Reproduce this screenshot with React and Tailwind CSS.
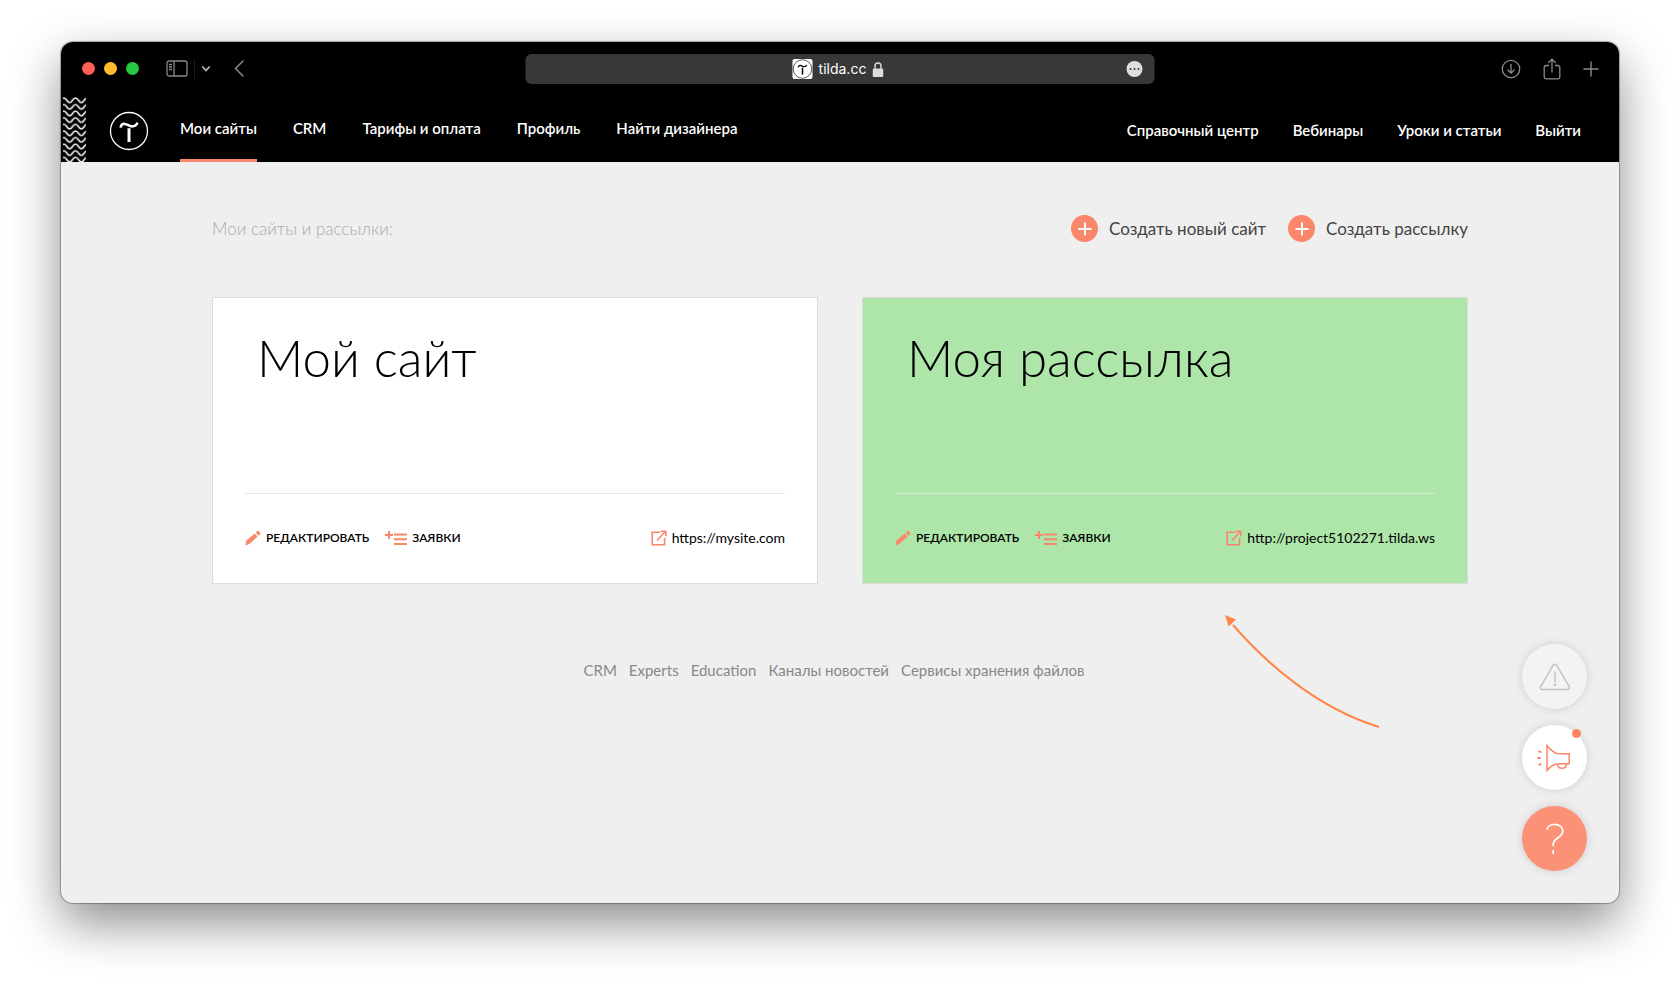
import React from 'react';

const mainLinks = [
  { label: 'Мои сайты', active: true },
  { label: 'CRM' },
  { label: 'Тарифы и оплата' },
  { label: 'Профиль' },
  { label: 'Найти дизайнера' },
];

const helpLinks = ['Справочный центр', 'Вебинары', 'Уроки и статьи', 'Выйти'];

const footerLinks = ['CRM', 'Experts', 'Education', 'Каналы новостей', 'Сервисы хранения файлов'];

const projects = [
  { title: 'Мой сайт', url: 'https://mysite.com', bg: 'bg-white', line: 'border-[#e6e6e6]' },
  { title: 'Моя рассылка', url: 'http://project5102271.tilda.ws', bg: 'bg-[#aee6aa]', line: 'border-[#d6e8d5]', arrow: true },
];

function TildaMark({ className }) {
  return (
    <svg viewBox="0 0 40 40" fill="none" stroke="currentColor" className={className} aria-hidden="true">
      <circle cx="20" cy="20" r="18.5" strokeWidth="1.3" />
      <path d="M11.6 16.6c.4-2.600 2-4 4.300-3.700 2.600.4 4.400 2.500 7 2.500 2.700 0 4.700-1.300 5.500-3.700" strokeWidth="2.500" />
      <path d="M20 17.300v13.700" strokeWidth="3" />
    </svg>
  );
}

function PencilIcon() {
  return (
    <svg viewBox="0 0 16 16" className="size-4 shrink-0" fill="#fa876b" aria-hidden="true">
      <path d="M1.200 10.800 9.800 3.400 12.600 6.600 4.200 14 .4 15.600z" />
      <path d="M10.700 2.600 12.300 1.200c.5-.5 1-.4 1.500 0l1.400 1.700c.4.5.3 1-.1 1.400L13.500 5.800z" />
    </svg>
  );
}

function LeadsIcon() {
  return (
    <svg viewBox="0 0 22 16" className="h-4 w-[22px] shrink-0" fill="#fa876b" aria-hidden="true">
      <path d="M3 1h2v3h3v2H5v3H3V6H0V4h3z" />
      <path d="M9 3.500h13v2H9zM9 8.200h13v2H9zM9 12.900h13v2H9z" />
    </svg>
  );
}

function ExternalIcon() {
  return (
    <svg viewBox="0 0 16 16" className="size-4 shrink-0" fill="none" stroke="#fa876b" strokeWidth="1.600" aria-hidden="true">
      <path d="M9 2.200H1.200v12.600h12.400V8" />
      <path d="M6 10.500 14 1.800M9.800 1.200h5v5" />
    </svg>
  );
}

function TitleBar() {
  return (
    <div className="relative flex h-[55px] items-center justify-between bg-black pb-0.5 pl-[21px] pr-5 text-[#8a8a8a]">
      <div className="flex items-center">
        <div className="flex gap-[9px]">
          <button aria-label="Закрыть" className="size-[13px] rounded-full bg-[#ff5f57]" />
          <button aria-label="Свернуть" className="size-[13px] rounded-full bg-[#febc2e]" />
          <button aria-label="Развернуть" className="size-[13px] rounded-full bg-[#28c840]" />
        </div>
        <button aria-label="Боковая панель" className="ml-[27px]">
          <svg viewBox="0 0 22 17" className="h-[17px] w-[22px]" fill="none" stroke="currentColor" strokeWidth="1.300">
            <rect x="1" y="1" width="20" height="15" rx="2" />
            <path d="M8 1v15M3 4.500h3M3 7h3M3 9.500h3" />
          </svg>
        </button>
        <span className="ml-1.5 h-5 w-px bg-[#1c1c1c]" />
        <button aria-label="Группы вкладок" className="ml-1.5">
          <svg viewBox="0 0 10 6" className="h-1.5 w-2.5" fill="none" stroke="#b5b5b5" strokeWidth="1.800">
            <path d="M1.800 1 5 4.400 8.200 1" strokeLinecap="round" />
          </svg>
        </button>
        <button aria-label="Назад" className="ml-[23px]">
          <svg viewBox="0 0 10 17" className="h-[17px] w-2.5" fill="none" stroke="currentColor" strokeWidth="1.500">
            <path d="M9 1 1.500 8.500 9 16" strokeLinecap="round" />
          </svg>
        </button>
      </div>

      <div className="absolute left-1/2 top-3 flex h-[30px] w-[629px] -translate-x-1/2 items-center justify-center gap-1.5 rounded-md bg-[#383838] pr-1 font-['Inter','Liberation_Sans',sans-serif] text-sm text-white">
        <span className="rounded-xs bg-white text-black">
          <TildaMark className="size-5" />
        </span>
        <span>tilda.cc</span>
        <svg viewBox="0 0 11 15" className="h-[15px] w-[11px]" aria-hidden="true">
          <path d="M2.500 7V4a3 3 0 0 1 6 0v3" fill="none" stroke="#dcdcdc" strokeWidth="1.400" />
          <rect y="6.500" width="11" height="8.500" rx="1.500" fill="#dcdcdc" />
        </svg>
        <button aria-label="Ещё" className="absolute right-3 top-[7px] flex size-4 items-center justify-center gap-0.5 rounded-full bg-[#dfdfdf]">
          <span className="size-0.5 rounded-full bg-[#383838]" />
          <span className="size-0.5 rounded-full bg-[#383838]" />
          <span className="size-0.5 rounded-full bg-[#383838]" />
        </button>
      </div>

      <div className="flex items-center gap-[22px]">
        <button aria-label="Загрузки">
          <svg viewBox="0 0 20 20" className="size-5" fill="none" stroke="currentColor" strokeWidth="1.300">
            <circle cx="10" cy="10" r="8.700" />
            <path d="M10 5.500v8.500M6.800 11 10 14.200 13.200 11" strokeLinecap="round" />
          </svg>
        </button>
        <button aria-label="Поделиться">
          <svg viewBox="0 0 18 22" className="h-[22px] w-[18px]" fill="none" stroke="currentColor" strokeWidth="1.300">
            <path d="M6 7.500H3a1.800 1.800 0 0 0-1.800 1.800v9.700A1.800 1.800 0 0 0 3 20.800h12a1.800 1.800 0 0 0 1.800-1.800V9.300A1.800 1.800 0 0 0 15 7.500h-3" />
            <path d="M9 14V1.500M5.700 4.500 9 1.200l3.300 3.300" strokeLinecap="round" />
          </svg>
        </button>
        <button aria-label="Новая вкладка">
          <svg viewBox="0 0 16 16" className="size-4" fill="none" stroke="currentColor" strokeWidth="1.400">
            <path d="M8 .5v15M.5 8h15" />
          </svg>
        </button>
      </div>
    </div>
  );
}

function SiteNav() {
  return (
    <header className="flex h-[65px] items-stretch bg-black text-[15px] font-semibold text-white">
      <svg className="ml-0.5 h-full w-[23px]" fill="none" stroke="#fff" strokeWidth="1.500" aria-hidden="true">
        <defs>
          <pattern id="waves" width="11.7" height="6.6" patternUnits="userSpaceOnUse" patternTransform="translate(.8 0)">
            <path d="M0 .9C3 .9 3 5.600 5.850 5.600S8.700.9 11.700.9" />
          </pattern>
        </defs>
        <rect width="23" height="65" fill="url(#waves)" stroke="none" />
      </svg>
      <a href="#" aria-label="Tilda" className="ml-[23px] flex items-center pt-0.5">
        <TildaMark className="size-10" />
      </a>
      <nav className="ml-[31px] flex gap-9">
        {mainLinks.map((link) => (
          <a
            key={link.label}
            href="#"
            className={`flex items-center border-b-3 ${link.active ? 'border-[#fa876b]' : 'border-transparent'}`}
          >
            {link.label}
          </a>
        ))}
      </nav>
      <nav className="ml-auto mr-[38px] flex items-center gap-[34px] pt-0.5">
        {helpLinks.map((label) => (
          <a key={label} href="#">{label}</a>
        ))}
      </nav>
    </header>
  );
}

function CreateButton({ children }) {
  return (
    <button className="flex items-center gap-[11px] text-[17px] text-[#444]">
      <span className="flex size-[27px] items-center justify-center rounded-full bg-[#fa876b]">
        <svg viewBox="0 0 14 14" className="size-3.5" stroke="#fff" strokeWidth="2" aria-hidden="true">
          <path d="M7 .5v13M.5 7h13" />
        </svg>
      </span>
      {children}
    </button>
  );
}

function ProjectCard({ project }) {
  return (
    <article className={`relative flex h-[287px] flex-col border border-[#dcdcdc] px-8 ${project.bg}`}>
      <h2 className="flex-1 pl-3 pt-7 text-[51px] leading-16 font-light text-black">{project.title}</h2>
      <div className={`flex h-[90px] items-center gap-4 border-t pb-0.5 text-xs text-black ${project.line}`}>
        <a href="#" className="flex items-center gap-[5px] font-semibold">
          <PencilIcon />
          РЕДАКТИРОВАТЬ
        </a>
        <a href="#" className="flex items-center gap-[5px] font-semibold">
          <LeadsIcon />
          ЗАЯВКИ
        </a>
        <a href="#" className="ml-auto flex items-center gap-[5px] text-sm">
          <ExternalIcon />
          {project.url}
        </a>
      </div>
      {project.arrow && (
        <svg viewBox="0 0 160 120" className="absolute right-[84px] top-full mt-7 h-[120px] w-40" fill="none" aria-hidden="true">
          <path d="M10 14C43 52 94 97 156 116" stroke="#ff8648" strokeWidth="2" />
          <path d="M2 4 13 8.500 5.500 15.500z" fill="#ff8648" />
        </svg>
      )}
    </article>
  );
}

function FloatingButtons() {
  return (
    <div className="absolute bottom-8 right-8 flex flex-col gap-4">
      <button aria-label="Предупреждения" className="flex size-[65px] items-center justify-center rounded-full bg-[#f3f3f3] shadow-[0_0_10px_rgba(0,0,0,0.14)]">
        <svg viewBox="0 0 32 28" className="h-7 w-8" fill="none" stroke="#c3c3c3" strokeWidth="1.500">
          <path d="M14.200 2.200a2 2 0 0 1 3.500 0l12.600 21.600a1.800 1.800 0 0 1-1.600 2.700H3.200a1.800 1.800 0 0 1-1.600-2.700z" />
          <path d="M16 8.500v10.500" />
          <circle cx="16" cy="21.800" r="1.400" fill="#c3c3c3" stroke="none" />
        </svg>
      </button>
      <button aria-label="Новости" className="relative flex size-[65px] items-center justify-center rounded-full bg-white pr-[3px] shadow-[0_0_10px_rgba(0,0,0,0.14)]">
        <svg viewBox="0 0 34 28" className="h-7 w-[34px]" fill="none" stroke="#fa876b" strokeWidth="1.500">
          <path d="M11 1.500v25c3.500-4.500 7.500-6.800 12-6.800h10.200V9.700H23c-4.500 0-8.500-3.700-12-8.200z" />
          <path d="M21.300 19.900c.4 5.800 8.800 5.800 9.300 0" />
          <path d="M1.200 14h3.600M2.500 7.200l3 1.300M2.500 21.100l3-1.300" strokeWidth="1.800" />
        </svg>
        <span className="absolute right-1.5 top-1 size-[9px] rounded-full bg-[#ff8562]" />
      </button>
      <button aria-label="Помощь" className="flex size-[65px] items-center justify-center rounded-full bg-[#fb9177] shadow-[0_0_10px_rgba(0,0,0,0.14)]">
        <svg viewBox="0 0 18 32" className="h-8 w-[18px]" fill="none" stroke="#fff" strokeWidth="1.700">
          <path d="M1 7C1 3.500 4.500 1.400 8.700 1.400S16.800 4 16.800 8c0 7-9.600 6.500-9.600 13.500v1.700M7.200 27v4" />
        </svg>
      </button>
    </div>
  );
}

export default function App() {
  return (
    <div className="flex min-h-screen flex-col bg-white px-[61px] pb-20 pt-[42px] font-['Lato','Noto_Sans',sans-serif]">
      <div className="relative flex flex-1 flex-col rounded-xl bg-[#efefef] shadow-[0_0_1px_1px_rgba(0,0,0,0.3),0_20px_50px_rgba(0,0,0,0.45)]">
        <div className="overflow-hidden rounded-t-xl">
          <TitleBar />
          <SiteNav />
        </div>
        <main className="mx-auto w-full max-w-[1256px] pt-[53px]">
          <div className="flex items-center justify-between">
            <h1 className="text-[17px] font-light text-[#aaa]">Мои сайты и рассылки:</h1>
            <div className="flex gap-[22px]">
              <CreateButton>Создать новый сайт</CreateButton>
              <CreateButton>Создать рассылку</CreateButton>
            </div>
          </div>
          <div className="mt-[55px] grid grid-cols-2 gap-11">
            {projects.map((project) => (
              <ProjectCard key={project.title} project={project} />
            ))}
          </div>
          <footer className="mt-[75px] flex justify-center gap-3 pr-3 text-[15px] text-[#888]">
            {footerLinks.map((label) => (
              <a key={label} href="#">{label}</a>
            ))}
          </footer>
        </main>
        <FloatingButtons />
      </div>
    </div>
  );
}
